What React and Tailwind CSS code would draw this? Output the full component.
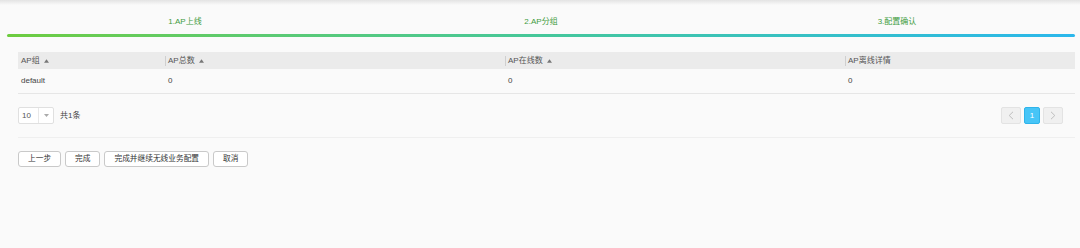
const steps = ['1.AP上线', '2.AP分组', '3.配置确认'];

const columns = [
  { label: 'AP组', sort: true, width: 'w-[147px]' },
  { label: 'AP总数', sort: true, width: 'w-[340px]' },
  { label: 'AP在线数', sort: true, width: 'w-[340px]' },
  { label: 'AP离线详情', sort: false, width: 'flex-1' },
];

const rows = [['default', '0', '0', '0']];

function SortIcon() {
  return (
    <svg width="5" height="4" viewBox="0 0 5 4" className="ml-[4px]">
      <path d="M2.5 0.3 L5 3.7 L0 3.7 Z" fill="#777" />
    </svg>
  );
}

function Chevron({ dir }) {
  return (
    <svg width="6" height="9" viewBox="0 0 6 9">
      <path
        d={dir === 'left' ? 'M5 0.8 L1.2 4.5 L5 8.2' : 'M1 0.8 L4.8 4.5 L1 8.2'}
        fill="none"
        stroke="#bdbdbd"
        strokeWidth="1"
      />
    </svg>
  );
}

function Button({ children }) {
  return (
    <button className="flex h-[16px] items-center rounded-[3px] border border-[#c9c9c9] bg-white px-[9px] text-[7.7px] leading-none text-[#333]">
      {children}
    </button>
  );
}

export default function App() {
  return (
    <div
      className="h-[248px] w-[1080px] overflow-hidden bg-[#fafafa]"
      style={{ fontFamily: '"Liberation Sans", "Noto Sans CJK SC", sans-serif' }}
    >
      <div className="h-[5px] bg-gradient-to-b from-[#e3e3e3] to-[#fafafa]" />

      <div className="ml-[7px] mr-[5px] grid h-[29px] grid-cols-3 items-center pt-[4px] text-[8px] leading-none text-[#3f9c3f]">
        {steps.map((s) => (
          <div key={s} className="text-center">{s}</div>
        ))}
      </div>
      <div className="ml-[7px] mr-[5px] h-[3px] rounded-full bg-gradient-to-r from-[#6dcc3e] via-[#45c79a] to-[#2bb7ec]" />

      <div className="ml-[18px] mr-[5px] mt-[15px]">
        <div className="flex h-[17px] items-center bg-[#ebebeb] text-[8px] leading-none text-[#555]">
          {columns.map((c, i) => (
            <div key={c.label} className={`${c.width} flex h-full items-center`}>
              {i > 0 && <span className="mr-[2px] h-[10px] w-px bg-[#cfcfcf]" />}
              <span className={i === 0 ? 'pl-[3px]' : ''}>{c.label}</span>
              {c.sort && <SortIcon />}
            </div>
          ))}
        </div>
        {rows.map((r) => (
          <div key={r[0]} className="flex h-[25px] items-center border-b border-[#e6e6e6] text-[8px] leading-none text-[#444]">
            {r.map((v, i) => (
              <div key={i} className={`${columns[i].width} pl-[3px]`}>{v}</div>
            ))}
          </div>
        ))}
      </div>

      <div className="ml-[18px] mr-[17px] mt-[13px] flex h-[17px] items-center justify-between">
        <div className="flex items-center text-[8px] leading-none text-[#444]">
          <div className="flex h-[17px] w-[36px] items-center rounded-[2px] border border-[#e0e0e0] bg-white">
            <span className="w-[19px] pl-[3px] text-[#555]">10</span>
            <span className="flex h-full flex-1 items-center justify-center border-l border-[#e8e8e8]">
              <svg width="5" height="3" viewBox="0 0 5 3">
                <path d="M0 0 L5 0 L2.5 3 Z" fill="#aaa" />
              </svg>
            </span>
          </div>
          <span className="ml-[6px]">共1条</span>
        </div>
        <div className="flex items-center gap-[3px]">
          <div className="flex h-[17px] w-[20px] items-center justify-center rounded-[2px] border border-[#e3e3e3] bg-[#f0f0f0]">
            <Chevron dir="left" />
          </div>
          <div className="flex h-[17px] w-[16px] items-center justify-center rounded-[2px] border border-[#2fb4ea] bg-[#47c5f7] text-[8px] leading-none text-white">
            1
          </div>
          <div className="flex h-[17px] w-[20px] items-center justify-center rounded-[2px] border border-[#e3e3e3] bg-[#f0f0f0]">
            <Chevron dir="right" />
          </div>
        </div>
      </div>

      <div className="ml-[18px] mr-[5px] mt-[13px] h-px bg-[#efefef]" />

      <div className="ml-[18px] mt-[13px] flex gap-[4px]">
        <Button>上一步</Button>
        <Button>完成</Button>
        <Button>完成并继续无线业务配置</Button>
        <Button>取消</Button>
      </div>
    </div>
  );
}
